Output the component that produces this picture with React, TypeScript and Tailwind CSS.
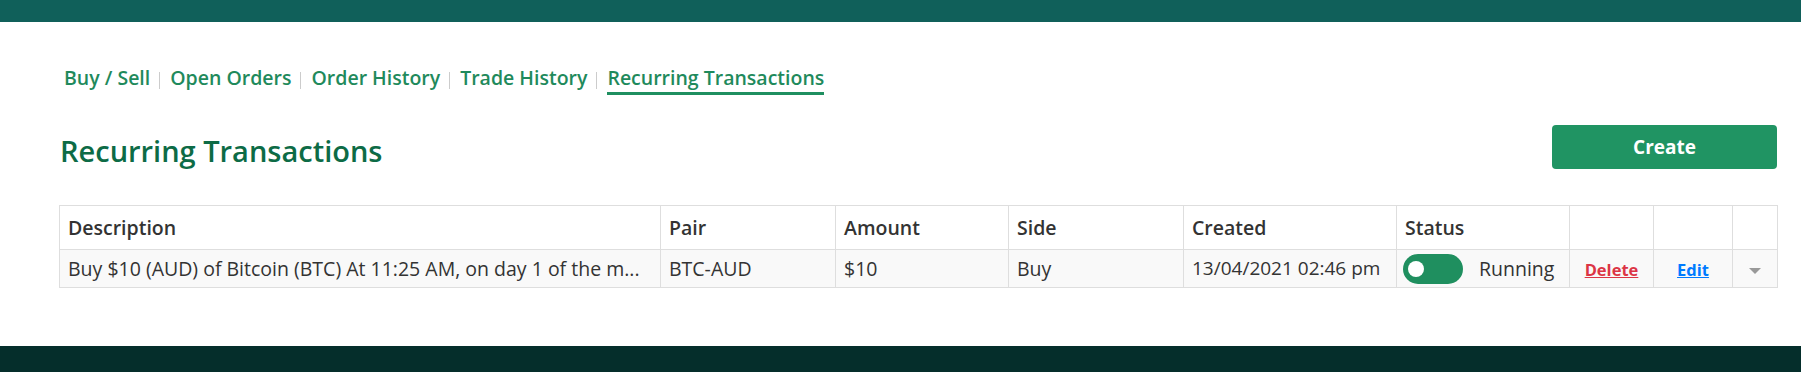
import React from 'react'

const tabs = ['Buy / Sell', 'Open Orders', 'Order History', 'Trade History', 'Recurring Transactions']

const cols = [
    { label: 'Description', w: 'w-[601px]' },
    { label: 'Pair', w: 'w-[175px]' },
    { label: 'Amount', w: 'w-[173px]' },
    { label: 'Side', w: 'w-[175px]' },
    { label: 'Created', w: 'w-[213px]' },
    { label: 'Status', w: 'w-[173px]' },
    { label: '', w: 'w-[84px]' },
    { label: '', w: 'w-[79px]' },
    { label: '', w: 'w-[45px]' },
]

const Tabs: React.FC = () => (
    <div className="flex items-center">
        {tabs.map((t, i) => {
            const active = i === tabs.length - 1
            return (
                <div key={t} className="flex items-center">
                    {i > 0 && <span className="ml-[9px] mr-[10px] h-[17px] w-px bg-[#cccccc]" />}
                    <a
                        href="#"
                        className={
                            'pb-px text-[19.5px] leading-[26px] font-semibold text-[#1f8a5c] ' +
                            (active ? 'border-b-[3px] border-[#1f8f60]' : 'border-b-[3px] border-transparent')
                        }
                    >
                        {t}
                    </a>
                </div>
            )
        })}
    </div>
)

const Toggle: React.FC = () => (
    <span className="relative inline-block h-[30px] w-[60px] shrink-0 rounded-full bg-[#1f8f5f]">
        <span className="absolute left-[5px] top-[7px] h-4 w-4 rounded-full bg-white" />
    </span>
)

export default function App() {
    return (
        <div className="flex min-h-[372px] flex-col bg-white font-['Open_Sans',sans-serif] text-[#333333]">
            <div className="h-[22px] bg-[#10605a]" />
            <main className="flex-1 pl-[59px] pr-[24px] pt-[43px]">
                <div className="pl-[5px]">
                    <Tabs />
                </div>
                <div className="mt-[29px] flex items-center justify-between">
                    <h1 className="pl-px pt-[8px] text-[29px] leading-[38px] font-semibold text-[#0d6b46]">
                        Recurring Transactions
                    </h1>
                    <button
                        type="button"
                        className="h-[44px] w-[225px] rounded-[4px] bg-[#209463] text-[19px] font-bold text-white"
                    >
                        Create
                    </button>
                </div>
                <table className="mt-[35px] w-[1718px] table-fixed border-collapse text-[19.5px]">
                    <colgroup>
                        {cols.map((c, i) => (
                            <col key={i} className={c.w} />
                        ))}
                    </colgroup>
                    <thead>
                        <tr className="h-[44px] bg-white">
                            {cols.map((c, i) => (
                                <th
                                    key={i}
                                    className="border border-[#dedede] px-2 text-left font-semibold"
                                >
                                    {c.label}
                                </th>
                            ))}
                        </tr>
                    </thead>
                    <tbody>
                        <tr className="h-[38px] bg-[#f9f9f9]">
                            <td className="overflow-hidden whitespace-nowrap border border-[#dedede] px-2">
                                Buy $10 (AUD) of Bitcoin (BTC) At 11:25 AM, on day 1 of the m...
                            </td>
                            <td className="border border-[#dedede] px-2">BTC-AUD</td>
                            <td className="border border-[#dedede] px-2">$10</td>
                            <td className="border border-[#dedede] px-2">Buy</td>
                            <td className="whitespace-nowrap border border-[#dedede] px-2 text-[19px]">13/04/2021 02:46 pm</td>
                            <td className="border border-[#dedede] px-[6px]">
                                <div className="flex items-center gap-4">
                                    <Toggle />
                                    <span>Running</span>
                                </div>
                            </td>
                            <td className="border border-[#dedede] text-center">
                                <a href="#" className="text-[16.5px] font-bold text-[#dc3545] underline">
                                    Delete
                                </a>
                            </td>
                            <td className="border border-[#dedede] text-center">
                                <a href="#" className="text-[16.5px] font-bold text-[#007bff] underline">
                                    Edit
                                </a>
                            </td>
                            <td className="border border-[#dedede] text-center">
                                <span className="inline-block h-0 w-0 border-x-[6px] border-t-[6px] border-x-transparent border-t-[#999999] align-middle" />
                            </td>
                        </tr>
                    </tbody>
                </table>
            </main>
            <div className="h-[26px] bg-[#052e2b]" />
        </div>
    )
}
